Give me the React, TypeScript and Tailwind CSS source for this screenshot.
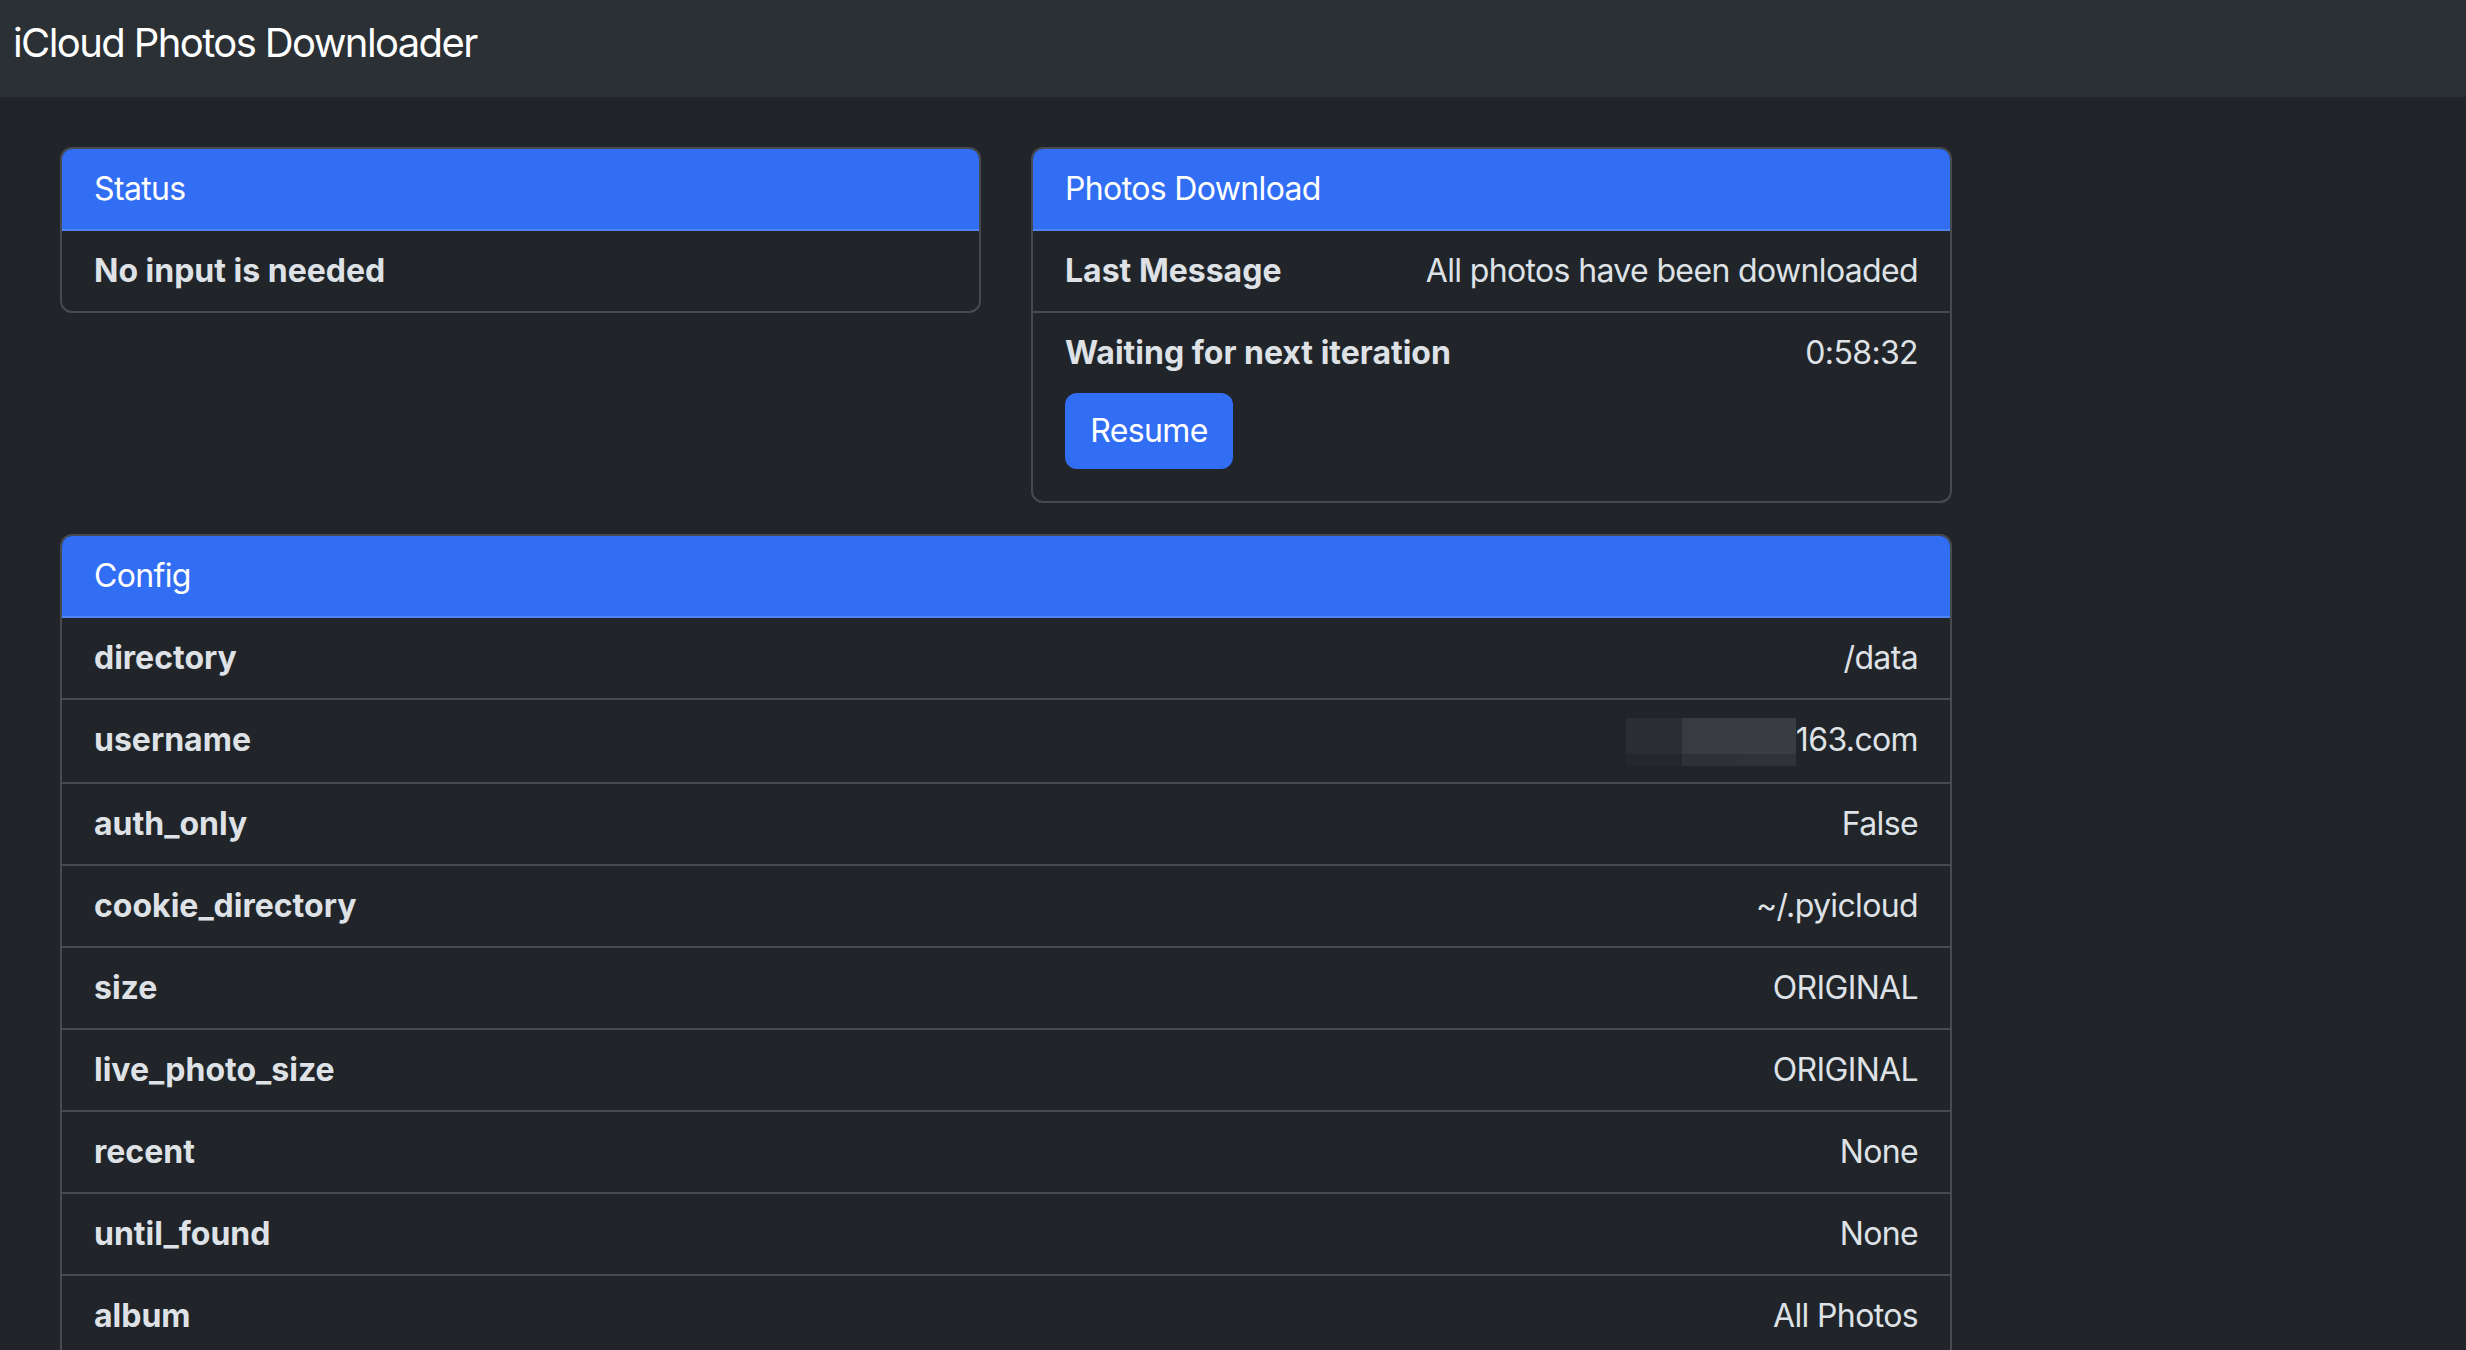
import React from "react";

interface ConfigRow {
    key: string;
    value: string;
}

const configRows: ConfigRow[] = [
    { key: "directory", value: "/data" },
    { key: "username", value: "163.com" },
    { key: "auth_only", value: "False" },
    { key: "cookie_directory", value: "~/.pyicloud" },
    { key: "size", value: "ORIGINAL" },
    { key: "live_photo_size", value: "ORIGINAL" },
    { key: "recent", value: "None" },
    { key: "until_found", value: "None" },
    { key: "album", value: "All Photos" },
    { key: "list_albums", value: "False" },
    { key: "skip_videos", value: "False" },
    { key: "skip_live_photos", value: "False" },
];

function Card({ title, children, className = "" }: { title: string; children: React.ReactNode; className?: string }) {
    return (
        <div className={`border-2 border-[#474a4e] rounded-[12px] overflow-hidden ${className}`}>
            <div className="bg-[#326ef4] border-b-2 border-[#4f84f5] px-8 py-4 text-[32px] leading-[48px] tracking-[-0.02em] text-white">
                {title}
            </div>
            <div className="flex flex-col">{children}</div>
        </div>
    );
}

// pixelated block that hides the email prefix
function Redacted() {
    return (
        <span className="mt-[2px] grid grid-cols-[56px_56px_58px] grid-rows-[36px_12px]">
            <span className="bg-[#2a2d31]" />
            <span className="bg-[#383b40]" />
            <span className="bg-[#393c41]" />
            <span className="bg-[#24272b]" />
            <span className="bg-[#2e3135]" />
            <span className="bg-[#2f3236]" />
        </span>
    );
}

export default function App() {
    return (
        <div
            className="min-h-screen bg-[#212529] text-[#dee2e6]"
            style={{ fontFamily: "Inter, 'Noto Sans', sans-serif" }}
        >
            {/* Navbar */}
            <nav className="h-[97px] bg-[#2b3035] px-[13px] pt-[23px]">
                <span className="text-[40px] leading-[40px] tracking-[-0.04em] text-white">iCloud Photos Downloader</span>
            </nav>

            <main className="ml-[60px] w-[1892px] pt-[50px]">
                <div className="grid grid-cols-2 gap-x-[50px] items-start">
                    {/* Status */}
                    <Card title="Status">
                        <div className="px-8 py-4 text-[32px] leading-[48px] font-bold">No input is needed</div>
                    </Card>

                    {/* Photos Download */}
                    <Card title="Photos Download">
                        <div className="flex justify-between px-8 py-4 text-[32px] leading-[48px] border-b-2 border-[#474a4e]">
                            <span className="font-bold">Last Message</span>
                            <span className="tracking-[-0.02em]">All photos have been downloaded</span>
                        </div>
                        <div className="px-8 py-4 text-[32px] leading-[48px]">
                            <div className="flex justify-between">
                                <span className="font-bold">Waiting for next iteration</span>
                                <span className="tracking-[-0.02em]">0:58:32</span>
                            </div>
                            <button className="mt-4 mb-4 h-[76px] w-[168px] rounded-[12px] bg-[#326ef4] text-white text-[32px] leading-[48px] tracking-[-0.02em]">
                                Resume
                            </button>
                        </div>
                    </Card>
                </div>

                {/* Config */}
                <Card title="Config" className="mt-[31px]">
                    {configRows.map((row, i) => (
                        <div
                            key={row.key}
                            className={`flex justify-between px-8 py-4 text-[32px] leading-[48px] ${i < configRows.length - 1 ? "border-b-2 border-[#474a4e]" : ""}`}
                        >
                            <span className="font-bold">{row.key}</span>
                            <span className="flex items-start tracking-[-0.02em]">
                                {row.key === "username" && <Redacted />}
                                <span>{row.value}</span>
                            </span>
                        </div>
                    ))}
                </Card>
            </main>
        </div>
    );
}
